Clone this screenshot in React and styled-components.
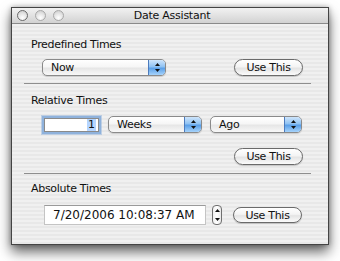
import React from "react";
import styled, { createGlobalStyle } from "styled-components";

const Global = createGlobalStyle`
  html, body { margin: 0; padding: 0; background: #ffffff; }
  body { font-family: "DejaVu Sans", sans-serif; }
  * { box-sizing: border-box; }
`;

const Stage = styled.div`
  padding: 7px 0 0 11px;
  width: 340px;
  height: 261px;
  overflow: hidden;
`;

const Window = styled.div`
  width: 318px;
  height: 238px;
  border: 1px solid #444444;
  display: flex;
  flex-direction: column;
  box-shadow: 0 7px 12px rgba(0, 0, 0, 0.6), 0 0 5px rgba(0, 0, 0, 0.3);
  background: repeating-linear-gradient(
    to bottom,
    #f0f0f0 0px,
    #f0f0f0 2px,
    #e8e8e8 2px,
    #e8e8e8 4px
  );
`;

const TitleBar = styled.div`
  height: 16px;
  flex: none;
  position: relative;
  display: flex;
  align-items: center;
  justify-content: center;
  background: linear-gradient(to bottom, #f2f2f2 0%, #e2e2e2 50%, #d2d2d2 100%);
  border-bottom: 1px solid #8a8a8a;
`;

const Lights = styled.div`
  position: absolute;
  left: 5px;
  top: 2px;
  display: flex;
  gap: 7px;
`;

const Light = styled.span`
  width: 11px;
  height: 11px;
  border-radius: 50%;
  border: 1px solid ${(p) => (p.$dark ? "#6a6a6a" : "#a8a8a8")};
  background: radial-gradient(circle at 50% 75%, #ffffff 0%, #e8e8e8 45%, #c8c8c8 100%);
`;

const Title = styled.div`
  font-size: 11px;
  letter-spacing: -0.25px;
  color: #111;
  line-height: 13px;
  margin-left: 4px;
`;

const Content = styled.div`
  flex: 1;
  display: flex;
  flex-direction: column;
  padding-top: 14px;
`;

const Label = styled.div`
  font-size: 11px;
  letter-spacing: -0.3px;
  line-height: 13px;
  color: #111;
  margin-left: 19px;
  margin-top: ${(p) => p.$top || 0}px;
`;

const Row = styled.div`
  display: flex;
  align-items: center;
  justify-content: ${(p) => p.$justify || "flex-start"};
  padding-left: ${(p) => p.$left || 0}px;
  padding-right: 25px;
  margin-top: ${(p) => p.$top || 0}px;
  height: ${(p) => p.$h || 17}px;
  gap: ${(p) => p.$gap || 0}px;
`;

const Separator = styled.div`
  height: 1px;
  background: #8e8e8e;
  margin: ${(p) => p.$top || 0}px 17px 0 12px;
`;

const PopupBox = styled.div`
  width: ${(p) => p.$w}px;
  height: 17px;
  display: flex;
  border: 1px solid #8a8a8a;
  border-radius: 5px;
  overflow: hidden;
  background: linear-gradient(to bottom, #ffffff 0%, #f6f6f6 45%, #e6e6e6 55%, #f8f8f8 100%);
  box-shadow: 0 1px 1px rgba(0, 0, 0, 0.15);
`;

const PopupText = styled.div`
  flex: 1;
  font-size: 11px;
  letter-spacing: -0.3px;
  line-height: 15px;
  padding-left: 8px;
  color: #111;
`;

const PopupArrow = styled.div`
  width: 17px;
  flex: none;
  display: flex;
  align-items: center;
  justify-content: center;
  border-left: 1px solid #4c7bbd;
  background: linear-gradient(to bottom, #cfe5fb 0%, #8fc2f3 45%, #5a9fe8 55%, #a6d3fb 100%);
`;

const UpDown = () => (
  <svg width="5" height="9" viewBox="0 0 5 9">
    <path d="M2.5 0 L5 3 L0 3 Z" fill="#111" />
    <path d="M0 6 L5 6 L2.5 9 Z" fill="#111" />
  </svg>
);

const Popup = ({ w, children }) => (
  <PopupBox $w={w}>
    <PopupText>{children}</PopupText>
    <PopupArrow>
      <UpDown />
    </PopupArrow>
  </PopupBox>
);

const Button = styled.div`
  width: 69px;
  height: ${(p) => p.$h || 17}px;
  border: 1px solid #6a6a6a;
  border-radius: 9px;
  display: flex;
  align-items: center;
  justify-content: center;
  font-size: 11px;
  letter-spacing: -0.3px;
  color: #111;
  background: linear-gradient(to bottom, #ffffff 0%, #f4f4f4 45%, #e4e4e4 55%, #fbfbfb 100%);
  box-shadow: 0 1px 1px rgba(0, 0, 0, 0.18);
`;

const NumberField = styled.div`
  width: 55px;
  height: 14px;
  margin-left: 1px;
  border: 1px solid #8a8a8a;
  background: #fff;
  display: flex;
  justify-content: flex-end;
  align-items: center;
  padding-right: 2px;
  box-shadow: 0 0 0 2px #8fb2dc, 0 0 0 3px rgba(143, 178, 220, 0.5);
  margin-right: 9px;
`;

const Selected = styled.span`
  background: #b5d5ff;
  font-size: 11px;
  line-height: 12px;
  padding: 0 1px;
  color: #111;
`;

const DateField = styled.div`
  width: 162px;
  height: 20px;
  margin-left: 1px;
  background: #fff;
  border: 1px solid #c4c4c4;
  border-top-color: #9a9a9a;
  font-size: 12px;
  line-height: 18px;
  padding-left: 8px;
  color: #111;
`;

const Stepper = styled.div`
  width: 10px;
  height: 20px;
  border: 1px solid #707070;
  border-radius: 4px;
  display: flex;
  align-items: center;
  justify-content: center;
  background: linear-gradient(to right, #f0f0f0, #ffffff 50%, #e8e8e8);
  margin-left: 6px;
  margin-right: 11px;
`;

const StepArrows = () => (
  <svg width="5" height="14" viewBox="0 0 5 14">
    <path d="M2.5 1 L5 4 L0 4 Z" fill="#111" />
    <path d="M0 10 L5 10 L2.5 13 Z" fill="#111" />
  </svg>
);

export default function App() {
  return (
    <>
      <Global />
      <Stage>
        <Window>
          <TitleBar>
            <Lights>
              <Light $dark />
              <Light />
              <Light />
            </Lights>
            <Title>Date Assistant</Title>
          </TitleBar>
          <Content>
            <Label>Predefined Times</Label>
            <Row $top={8} $left={30} $justify="space-between">
              <Popup w={124}>Now</Popup>
              <Button>Use This</Button>
            </Row>
            <Separator $top={7} />
            <Label $top={10}>Relative Times</Label>
            <Row $top={9} $left={31} $h={17}>
              <NumberField>
                <Selected>1</Selected>
              </NumberField>
              <Popup w={94}>Weeks</Popup>
              <span style={{ width: 8 }} />
              <Popup w={92}>Ago</Popup>
            </Row>
            <Row $top={15} $justify="flex-end">
              <Button>Use This</Button>
            </Row>
            <Separator $top={8} />
            <Label $top={8}>Absolute Times</Label>
            <Row $top={10} $left={31} $h={20}>
              <DateField>7/20/2006 10:08:37 AM</DateField>
              <Stepper>
                <StepArrows />
              </Stepper>
              <Button $h={16}>Use This</Button>
            </Row>
          </Content>
        </Window>
      </Stage>
    </>
  );
}
